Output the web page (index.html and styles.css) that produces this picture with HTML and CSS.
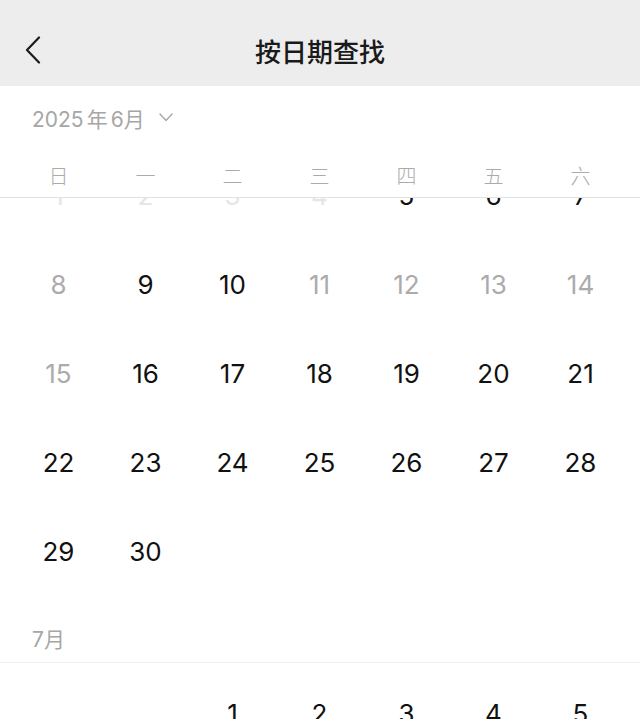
FILE: index.html
```html
<!DOCTYPE html>
<html lang="zh-CN">
<head>
  <meta charset="UTF-8">
  <title>按日期查找</title>
  <link rel="stylesheet" href="styles.css">
</head>
<body>

  <header class="nav-bar">
    <button class="back-btn" aria-label="返回">
      <svg width="18" height="28" viewBox="0 0 18 28">
        <path d="M15 1.5 L3 14 L15 26.5" fill="none" stroke="#1c1c1c" stroke-width="2.2" stroke-linecap="round" stroke-linejoin="round"/>
      </svg>
    </button>
    <h1 class="nav-title">按日期查找</h1>
  </header>

  <div class="month-picker">
    <span class="month-text">2025<span class="unit">年</span>6月</span>
    <svg width="14" height="9" viewBox="0 0 14 9">
      <path d="M1 1 L7 7.5 L13 1" fill="none" stroke="#a8a8a8" stroke-width="1.4" stroke-linecap="round" stroke-linejoin="round"/>
    </svg>
  </div>

  <div class="weekdays">
    <div>日</div>
    <div>一</div>
    <div>二</div>
    <div>三</div>
    <div>四</div>
    <div>五</div>
    <div>六</div>
  </div>

  <div class="calendar-scroll">
    <!-- June 2025 -->
    <div class="days june">
      <div class="day faded">1</div>
      <div class="day faded">2</div>
      <div class="day faded">3</div>
      <div class="day faded">4</div>
      <div class="day">5</div>
      <div class="day">6</div>
      <div class="day">7</div>
      <div class="day muted">8</div>
      <div class="day">9</div>
      <div class="day">10</div>
      <div class="day muted">11</div>
      <div class="day muted">12</div>
      <div class="day muted">13</div>
      <div class="day muted">14</div>
      <div class="day muted">15</div>
      <div class="day">16</div>
      <div class="day">17</div>
      <div class="day">18</div>
      <div class="day">19</div>
      <div class="day">20</div>
      <div class="day">21</div>
      <div class="day">22</div>
      <div class="day">23</div>
      <div class="day">24</div>
      <div class="day">25</div>
      <div class="day">26</div>
      <div class="day">27</div>
      <div class="day">28</div>
      <div class="day">29</div>
      <div class="day">30</div>
    </div>

    <!-- July 2025 -->
    <div class="month-label">7月</div>
    <div class="days july">
      <div class="empty"></div>
      <div class="empty"></div>
      <div class="day">1</div>
      <div class="day">2</div>
      <div class="day">3</div>
      <div class="day">4</div>
      <div class="day">5</div>
    </div>
  </div>

</body>
</html>
```

FILE: styles.css
```css
body {
  margin: 0;
  background: #fff;
  font-family: Inter, "Noto Sans CJK SC", sans-serif;
  color: #111;
  height: 719px;
  overflow: hidden;
  display: flex;
  flex-direction: column;
}

.nav-bar {
  height: 86px;
  background: #ededed;
  display: flex;
  align-items: center;
  justify-content: center;
  position: relative;
  flex-shrink: 0;
}

.back-btn {
  position: absolute;
  left: 24px;
  top: 36px;
  padding: 0;
  border: none;
  background: none;
  display: flex;
}

.nav-title {
  margin: 0;
  padding-top: 14px;
  font-family: "Noto Sans CJK SC", sans-serif;
  font-size: 26px;
  font-weight: 500;
  color: #1a1a1a;
}

.month-picker {
  height: 62px;
  padding-left: 32px;
  display: flex;
  align-items: center;
  gap: 14px;
  font-size: 21px;
  color: #a6a6a6;
  flex-shrink: 0;
}

.month-text {
  padding-top: 1px;
}

.month-text .unit {
  margin: 0 3px;
}

.weekdays {
  display: grid;
  grid-template-columns: repeat(7, 87px);
  padding: 6px 15px 0;
  height: 43px;
  align-items: center;
  border-bottom: 1px solid #e2e2e2;
  font-family: "Noto Sans CJK SC", sans-serif;
  font-size: 20px;
  font-weight: 300;
  color: #ababab;
  text-align: center;
  flex-shrink: 0;
}

.calendar-scroll {
  flex: 1;
  overflow: hidden;
}

.days {
  display: grid;
  grid-template-columns: repeat(7, 87px);
  grid-auto-rows: 89px;
  padding: 0 15px;
  align-items: center;
  text-align: center;
}

.days.june {
  margin-top: -47px;
}

.days.july {
  padding-top: 6px;
}

.day {
  font-size: 26px;
  color: #111;
}

.day.muted {
  color: #ababab;
}

.day.faded {
  color: #e6e6e6;
}

.month-label {
  padding: 32px 0 10px 32px;
  line-height: 24px;
  font-size: 21px;
  color: #a6a6a6;
  border-bottom: 1px solid #efefef;
}
```
